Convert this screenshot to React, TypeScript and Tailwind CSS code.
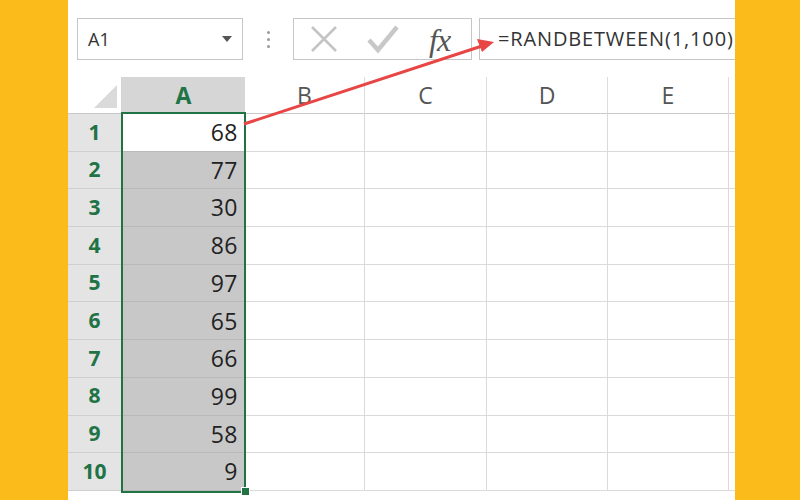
import React from "react";

const values = [68, 77, 30, 86, 97, 65, 66, 99, 58, 9];
const cols = ["B", "C", "D", "E"];

export default function App() {
  const font = { fontFamily: '"Open Sans", "Noto Sans", sans-serif' };
  return (
    <div className="w-[800px] h-[500px] bg-[#fbbb1b] flex overflow-hidden" style={font}>
      <div className="ml-[68px] w-[667px] h-full bg-white relative overflow-hidden flex flex-col">
        {/* toolbar */}
        <div className="h-[77px] shrink-0 flex items-start pt-[18px] pl-[9px]">
          <div className="w-[166px] h-[42px] border border-[#c6c6c6] flex items-center pl-[10px] pr-[10px] justify-between">
            <span className="text-[18px] text-[#333]">A1</span>
            <span className="w-0 h-0 border-l-[5px] border-r-[5px] border-t-[6px] border-l-transparent border-r-transparent border-t-[#555]" />
          </div>
          <div className="w-[50px] h-[42px] flex flex-col items-center justify-center gap-[4px]">
            <span className="w-[3px] h-[3px] bg-[#9a9a9a] rounded-full" />
            <span className="w-[3px] h-[3px] bg-[#9a9a9a] rounded-full" />
            <span className="w-[3px] h-[3px] bg-[#9a9a9a] rounded-full" />
          </div>
          <div className="w-[179px] h-[42px] border border-[#c6c6c6] flex items-center">
            <svg width="30" height="30" viewBox="0 0 30 30" className="ml-[15px]">
              <path d="M3 3 L27 27 M27 3 L3 27" stroke="#c4c4c4" strokeWidth="2.6" fill="none" />
            </svg>
            <svg width="32" height="30" viewBox="0 0 32 30" className="ml-[28px]">
              <path d="M2 16 L11 26 L30 3" stroke="#c8c8c8" strokeWidth="4.5" fill="none" />
            </svg>
            <span
              className="ml-[30px] text-[32px] italic text-[#555] leading-none tracking-[-1px] mt-[2px]"
              style={{ fontFamily: '"Liberation Serif", "DejaVu Serif", serif' }}
            >
              fx
            </span>
          </div>
          <div className="ml-[7px] flex-1 h-[42px] border border-[#c6c6c6] border-r-0 flex items-center pl-[18px]">
            <span className="text-[20px] text-[#333] tracking-[0.85px] whitespace-nowrap">=RANDBETWEEN(1,100)</span>
          </div>
        </div>

        {/* grid */}
        <div className="grid grid-cols-[54px_123px_120px_122px_121px_121px_6px]">
          {/* header row */}
          <div className="h-[37px] border-b border-[#c9c9c9] border-r border-r-[#d4d4d4] relative">
            <svg width="54" height="37" className="absolute left-0 top-0">
              <polygon points="49,8 49,31 26,31" fill="#dadada" />
            </svg>
          </div>
          <div className="h-[37px] bg-[#d6d6d6] border-b border-[#c9c9c9] flex items-center justify-center">
            <span className="text-[23px] font-bold text-[#217346]">A</span>
          </div>
          {cols.map((c) => (
            <div
              key={c}
              className="h-[37px] border-b border-[#c9c9c9] border-r border-r-[#dcdcdc] flex items-center justify-center"
            >
              <span className="text-[23px] text-[#555]">{c}</span>
            </div>
          ))}
          <div className="h-[37px] border-b border-[#c9c9c9]" />

          {values.map((v, i) => (
            <React.Fragment key={i}>
              <div className="h-[37.7px] bg-[#e4e4e4] border-b border-[#cfcfcf] border-r border-r-[#c9c9c9] flex items-center justify-center">
                <span className="text-[21px] font-bold text-[#217346]">{i + 1}</span>
              </div>
              <div
                className={`h-[37.7px] border-b border-[#b9b9b9] flex items-center justify-end pr-[7px] ${
                  i === 0 ? "bg-white" : "bg-[#c8c8c8]"
                }`}
              >
                <span className="text-[23px] text-[#222] tracking-[0.5px]">{v}</span>
              </div>
              {cols.map((c) => (
                <div key={c} className="h-[37.7px] border-b border-[#dadada] border-r border-r-[#dadada]" />
              ))}
              <div className="h-[37.7px] border-b border-[#dadada]" />
            </React.Fragment>
          ))}
        </div>

        {/* selection border */}
        <div className="absolute left-[53px] top-[112px] w-[125px] h-[381px] border-[2.5px] border-[#217346] pointer-events-none" />
        <div className="absolute left-[173px] top-[487px] w-[9px] h-[9px] bg-[#217346] border border-white" />

        {/* red arrow */}
        <svg className="absolute left-0 top-0 pointer-events-none" width="667" height="500">
          <line x1="176" y1="124" x2="414" y2="46" stroke="#e84545" strokeWidth="3" />
          <polygon points="426,42 409,39 414,52" fill="#e84545" />
        </svg>
      </div>
    </div>
  );
}
